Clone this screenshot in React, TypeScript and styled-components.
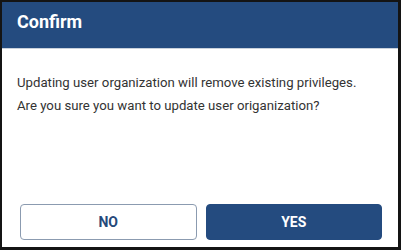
import React from "react";
import styled, { createGlobalStyle } from "styled-components";

const Global = createGlobalStyle`
  html, body { margin: 0; padding: 0; background: #fff; }
  body { font-family: Roboto, "Liberation Sans", Arial, sans-serif; }
`;

const Dialog = styled.div`
  box-sizing: border-box;
  width: 401px;
  height: 250px;
  border-style: solid;
  border-color: #141414;
  border-width: 2px 3px 3px 2px;
  display: flex;
  flex-direction: column;
  background: #fff;
`;

const Header = styled.div`
  box-sizing: border-box;
  height: 47px;
  background: #244b7f;
  border-bottom: 1px solid #c9d1dc;
  padding: 9px 15px 0;
`;

const Title = styled.h1`
  margin: 0;
  color: #fff;
  font-size: 18px;
  line-height: normal;
  font-weight: 700;
`;

const Body = styled.div`
  flex: 1;
  padding: 22px 15px 0;
  color: #333;
  font-size: 13.2px;
  line-height: 23px;
`;

const Footer = styled.div`
  display: flex;
  gap: 9px;
  padding: 0 16px 7px 18px;
`;

const Button = styled.button<{ $primary?: boolean }>`
  flex: 1;
  height: 36px;
  border-radius: 4px;
  font-family: inherit;
  font-size: 14px;
  font-weight: 700;
  cursor: pointer;
  border: 1px solid ${(p) => (p.$primary ? "#244b7f" : "#8b9bb0")};
  background: ${(p) => (p.$primary ? "#244b7f" : "#fff")};
  color: ${(p) => (p.$primary ? "#fff" : "#26497a")};
`;

export default function App() {
  return (
    <>
      <Global />
      <Dialog>
        <Header>
          <Title>Confirm</Title>
        </Header>
        <Body>
          Updating user organization will remove existing privileges.
          <br />
          Are you sure you want to update user origanization?
        </Body>
        <Footer>
          <Button>NO</Button>
          <Button $primary>YES</Button>
        </Footer>
      </Dialog>
    </>
  );
}
